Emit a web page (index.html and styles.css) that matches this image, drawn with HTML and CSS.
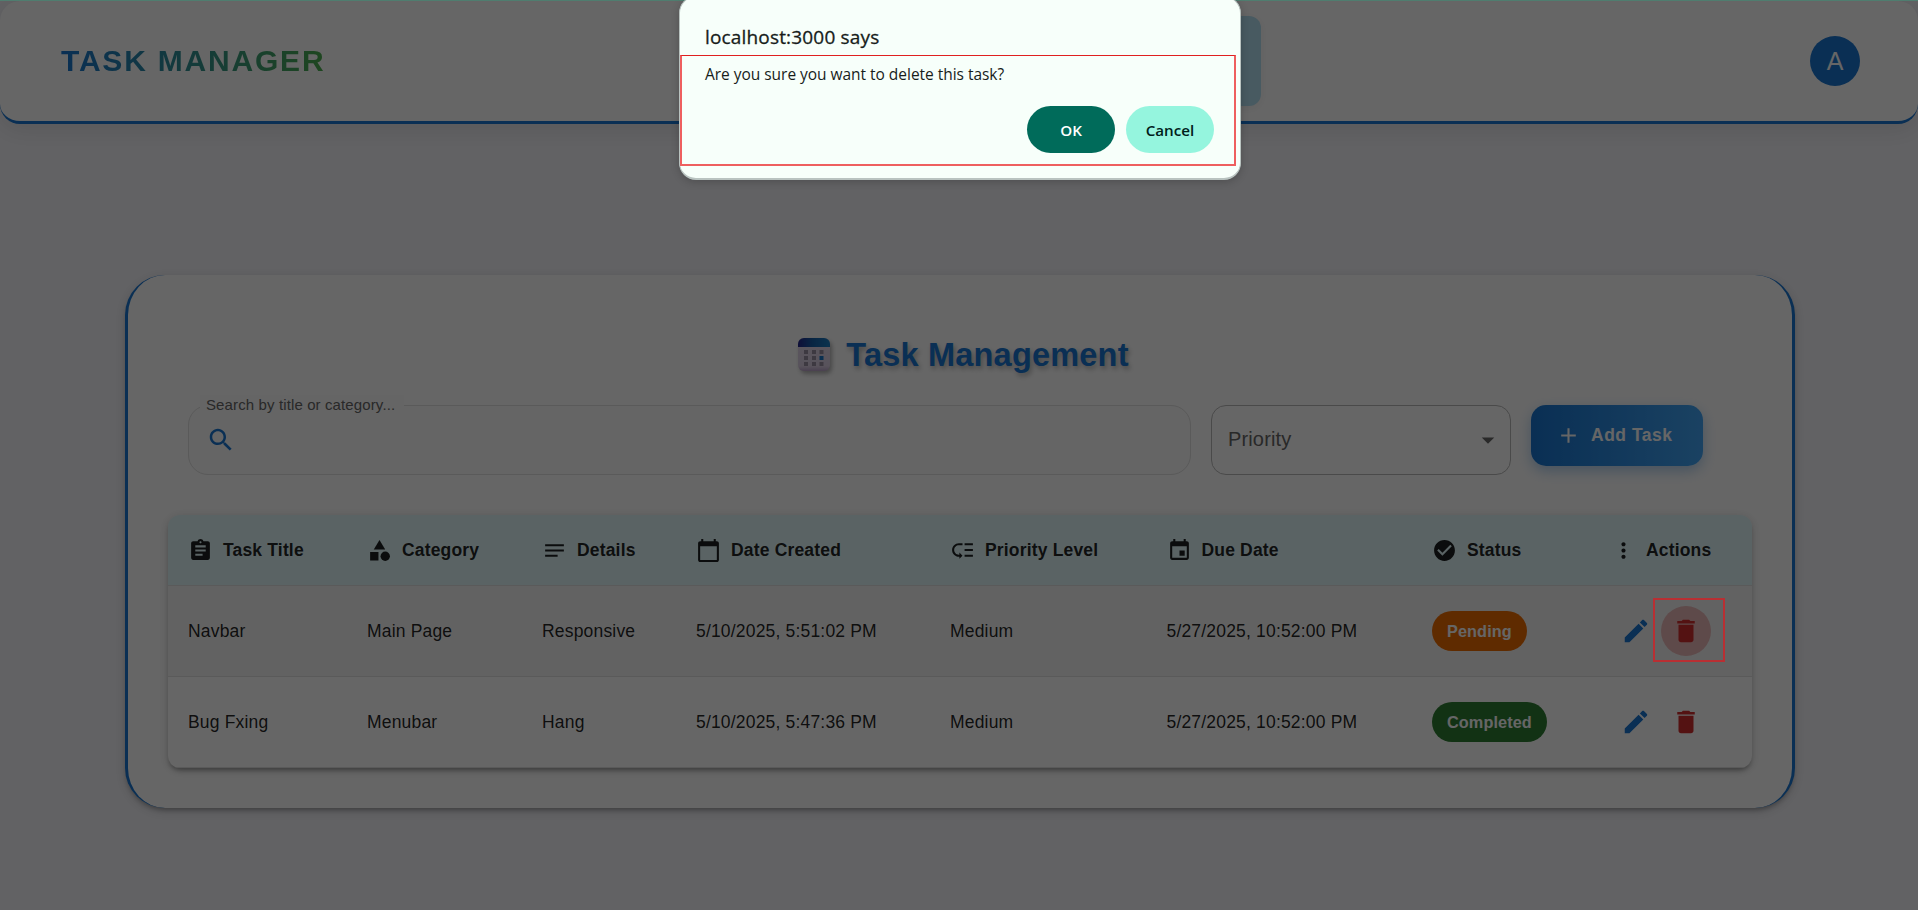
FILE: index.html
```html
<!DOCTYPE html>
<html lang="en">
<head>
<meta charset="utf-8">
<title>Task Manager</title>
<link rel="stylesheet" href="styles.css">
</head>
<body>
<svg class="sprite" width="0" height="0" aria-hidden="true">
  <symbol id="i-assignment" viewBox="0 0 24 24"><path d="M19 3h-4.18C14.4 1.84 13.3 1 12 1c-1.3 0-2.4.84-2.82 2H5c-1.1 0-2 .9-2 2v14c0 1.1.9 2 2 2h14c1.1 0 2-.9 2-2V5c0-1.1-.9-2-2-2zm-7 0c.55 0 1 .45 1 1s-.45 1-1 1-1-.45-1-1 .45-1 1-1zm2 14H7v-2h7v2zm3-4H7v-2h10v2zm0-4H7V7h10v2z"/></symbol>
  <symbol id="i-category" viewBox="0 0 24 24"><path d="M12 2l-5.5 9h11z"/><circle cx="17.5" cy="17.5" r="4.5"/><path d="M3 13.5h8v8H3z"/></symbol>
  <symbol id="i-notes" viewBox="0 0 24 24"><path d="M3 18h12v-2H3v2zM3 6v2h18V6H3zm0 7h18v-2H3v2z"/></symbol>
  <symbol id="i-calendar" viewBox="0 0 24 24"><path d="M20 3h-1V1h-2v2H7V1H5v2H4c-1.1 0-2 .9-2 2v16c0 1.1.9 2 2 2h16c1.1 0 2-.9 2-2V5c0-1.1-.9-2-2-2zm0 18H4V8h16v13z"/></symbol>
  <symbol id="i-low" viewBox="0 0 24 24"><path d="M14 5h8v2h-8zm0 5.5h8v2h-8zm0 5.5h8v2h-8zM2 11.5C2 15.08 4.92 18 8.5 18H9v2l3-3-3-3v2h-.5C6.02 16 4 13.98 4 11.5S6.02 7 8.5 7H12V5H8.5C4.92 5 2 7.92 2 11.5z"/></symbol>
  <symbol id="i-event" viewBox="0 0 24 24"><path d="M17 12h-5v5h5v-5zM16 1v2H8V1H6v2H5c-1.11 0-1.99.9-1.99 2L3 19c0 1.1.89 2 2 2h14c1.1 0 2-.9 2-2V5c0-1.1-.9-2-2-2h-1V1h-2zm3 18H5V8h14v11z"/></symbol>
  <symbol id="i-check" viewBox="0 0 24 24"><path d="M12 2C6.48 2 2 6.48 2 12s4.48 10 10 10 10-4.48 10-10S17.52 2 12 2zm-2 15l-5-5 1.41-1.41L10 14.17l7.59-7.59L19 8l-9 9z"/></symbol>
  <symbol id="i-more" viewBox="0 0 24 24"><path d="M12 8c1.1 0 2-.9 2-2s-.9-2-2-2-2 .9-2 2 .9 2 2 2zm0 2c-1.100 0-2 .9-2 2s.9 2 2 2 2-.9 2-2-.9-2-2-2zm0 6c-1.100 0-2 .9-2 2s.9 2 2 2 2-.9 2-2-.9-2-2-2z"/></symbol>
  <symbol id="i-edit" viewBox="0 0 24 24"><path d="M3 17.25V21h3.75L17.810 9.940l-3.750-3.750L3 17.250zM20.710 7.040c.39-.39.39-1.020 0-1.410l-2.340-2.340c-.39-.39-1.020-.39-1.410 0l-1.830 1.830 3.750 3.750 1.830-1.830z"/></symbol>
  <symbol id="i-delete" viewBox="0 0 24 24"><path d="M6 19c0 1.100.9 2 2 2h8c1.100 0 2-.9 2-2V7H6v12zM19 4h-3.500l-1-1h-5l-1 1H5v2h14V4z"/></symbol>
  <symbol id="i-search" viewBox="0 0 24 24"><path d="M15.500 14h-.79l-.28-.27C15.410 12.590 16 11.110 16 9.500 16 5.910 13.090 3 9.500 3S3 5.910 3 9.500 5.910 16 9.500 16c1.610 0 3.090-.59 4.230-1.570l.27.28v.79l5 4.990L20.490 19l-4.990-5zm-6 0C7.010 14 5 11.990 5 9.500S7.010 5 9.500 5 14 7.010 14 9.500 11.990 14 9.500 14z"/></symbol>
  <symbol id="i-add" viewBox="0 0 24 24"><path d="M19 13h-6v6h-2v-6H5v-2h6V5h2v6h6v2z"/></symbol>
  <symbol id="i-drop" viewBox="0 0 24 24"><path d="M7 10l5 5 5-5z"/></symbol>
</svg>

<div class="page">
  <header class="navbar">
    <div class="brand">TASK MANAGER</div>
    <div class="nav-pill"></div>
    <div class="avatar">A</div>
  </header>

  <main class="card">
    <h1 class="heading">
      <svg class="heading-icon" viewBox="0 0 32 34">
        <defs>
          <linearGradient id="cal-top" x1="0" x2="1"><stop offset="0" stop-color="#26268c"/><stop offset=".45" stop-color="#155ea8"/><stop offset="1" stop-color="#1d7fc4"/></linearGradient>
          <linearGradient id="cal-body" x1="0" y1="0" x2="0" y2="1"><stop offset="0" stop-color="#e2d8ea"/><stop offset=".85" stop-color="#dccfe4"/><stop offset="1" stop-color="#b9a0c8"/></linearGradient>
        </defs>
        <rect x="0" y="0" width="32" height="33" rx="6" fill="url(#cal-body)"/>
        <path d="M0 9V6a6 6 0 0 1 6-6h20a6 6 0 0 1 6 6v3z" fill="url(#cal-top)"/>
        <path fill="#9a8fa2" d="M6 12h4v4H6zM14 12h4v4h-4zM21.500 12h4v4h-4zM6 18h4v4H6zM14 18h4v4h-4zM6 24h4v4H6zM14 24h4v4h-4zM21.500 24h4v4h-4z"/>
        <path fill="#1976c8" d="M21.500 18h4v4h-4z"/>
      </svg>
      <span>Task Management</span>
    </h1>

    <div class="toolbar">
      <div class="search">
        <span class="search-label">Search by title or category...</span>
        <svg class="icon-lg"><use href="#i-search"/></svg>
      </div>
      <div class="select"><span>Priority</span><svg class="icon-lg"><use href="#i-drop"/></svg></div>
      <button class="add"><svg class="icon"><use href="#i-add"/></svg>Add Task</button>
    </div>

    <div class="table-wrap">
      <table>
        <colgroup><col class="c1"><col class="c2"><col class="c3"><col class="c4"><col class="c5"><col class="c6"><col class="c7"><col></colgroup>
        <thead>
          <tr>
            <th><div class="th"><svg class="icon"><use href="#i-assignment"/></svg>Task Title</div></th>
            <th><div class="th"><svg class="icon"><use href="#i-category"/></svg>Category</div></th>
            <th><div class="th"><svg class="icon"><use href="#i-notes"/></svg>Details</div></th>
            <th><div class="th"><svg class="icon"><use href="#i-calendar"/></svg>Date Created</div></th>
            <th><div class="th"><svg class="icon"><use href="#i-low"/></svg>Priority Level</div></th>
            <th><div class="th"><svg class="icon"><use href="#i-event"/></svg>Due Date</div></th>
            <th><div class="th"><svg class="icon"><use href="#i-check"/></svg>Status</div></th>
            <th><div class="th"><svg class="icon"><use href="#i-more"/></svg>Actions</div></th>
          </tr>
        </thead>
        <tbody>
          <tr class="hovered">
            <td>Navbar</td><td>Main Page</td><td>Responsive</td><td>5/10/2025, 5:51:02 PM</td><td>Medium</td><td>5/27/2025, 10:52:00 PM</td>
            <td><span class="chip pending">Pending</span></td>
            <td><div class="actions"><span class="btn edit"><svg class="icon-lg"><use href="#i-edit"/></svg></span><span class="btn delete active"><svg class="icon-lg"><use href="#i-delete"/></svg></span></div></td>
          </tr>
          <tr>
            <td>Bug Fxing</td><td>Menubar</td><td>Hang</td><td>5/10/2025, 5:47:36 PM</td><td>Medium</td><td>5/27/2025, 10:52:00 PM</td>
            <td><span class="chip completed">Completed</span></td>
            <td><div class="actions"><span class="btn edit"><svg class="icon-lg"><use href="#i-edit"/></svg></span><span class="btn delete"><svg class="icon-lg"><use href="#i-delete"/></svg></span></div></td>
          </tr>
        </tbody>
      </table>
    </div>
  </main>
</div>

<div class="scrim"></div>
<div class="mark mark-delete"></div>

<div class="dialog" role="alertdialog">
  <div class="dialog-title">localhost:3000 says</div>
  <div class="dialog-text">Are you sure you want to delete this task?</div>
  <div class="dialog-actions">
    <button class="ok">OK</button>
    <button class="cancel">Cancel</button>
  </div>
</div>
<div class="mark mark-dialog"></div>
</body>
</html>
```
FILE: styles.css
```css
* { box-sizing: border-box; }

body {
  margin: 0;
  height: 910px;
  overflow: hidden;
  position: relative;
  background: #f5f5fa;
  font-family: "Liberation Sans", Arial, sans-serif;
  font-size: 17.5px;
  color: rgba(0, 0, 0, 0.87);
}

button { border: 0; font-family: inherit; }

.sprite { position: absolute; }
.icon { width: 25px; height: 25px; fill: currentColor; flex: none; }
.icon-lg { width: 30px; height: 30px; fill: currentColor; flex: none; }

.page { padding-top: 1px; height: 910px; }

/* Top bar */
.navbar {
  display: flex;
  align-items: center;
  justify-content: space-between;
  height: 123px;
  padding: 0 58px 0 61px;
  background: #fff;
  border-bottom: 3px solid #1976d2;
  border-radius: 20px;
  box-shadow: 0 5px 25px rgba(0, 0, 0, 0.1);
}

.brand {
  font-size: 30px;
  font-weight: 700;
  letter-spacing: 1.8px;
  width: 264px;
  padding-bottom: 1px;
  white-space: nowrap;
  background: linear-gradient(90deg, #1976d2, #4caf50);
  background-clip: text;
  -webkit-background-clip: text;
  color: transparent;
}

.nav-pill {
  width: 560px;
  height: 90px;
  margin-left: auto;
  margin-right: 549px;
  border-radius: 12px;
  background: #b3e0f2;
  box-shadow: 0 2px 10px rgba(0, 0, 0, 0.06);
}

.avatar {
  width: 50px;
  height: 50px;
  border-radius: 50%;
  background: #1976d2;
  color: #fff;
  font-size: 25px;
  display: flex;
  align-items: center;
  justify-content: center;
}

/* Task card */
.card {
  width: 1670px;
  height: 533px;
  margin: 151px auto 0 125px;
  padding: 58px 40px 0;
  background: #fff;
  border: solid #1976d2;
  border-width: 0 3px;
  border-radius: 40px;
  box-shadow: 0 4px 5px -2px rgba(0, 0, 0, 0.3), 0 3px 12px rgba(0, 0, 0, 0.14);
}

.heading {
  margin: 0;
  height: 72px;
  display: flex;
  justify-content: center;
  gap: 16.5px;
  padding-left: 6.5px;
  font-size: 32.5px;
  line-height: 44px;
  letter-spacing: 0.2px;
  color: #1976d2;
  text-shadow: 2px 3px 5px rgba(0, 0, 0, 0.3);
}

.heading-icon {
  width: 32px;
  height: 34px;
  margin-top: 5px;
  filter: drop-shadow(2px 3px 2px rgba(0, 0, 0, 0.3));
}

.toolbar {
  display: flex;
  gap: 20px;
  height: 110px;
  padding: 0 20px;
}

.search {
  position: relative;
  display: flex;
  align-items: center;
  width: 1003px;
  height: 70px;
  padding-left: 17px;
  border: 1px solid #e0e0e0;
  border-radius: 20px;
  background: #fcfcfc;
  color: #1976d2;
}

.search-label {
  position: absolute;
  left: 11px;
  top: -11px;
  padding: 0 9px 0 6px;
  background: #fdfdfd;
  font-size: 15px;
  line-height: 19px;
  letter-spacing: 0.12px;
  color: #666;
}

.select {
  display: flex;
  align-items: center;
  justify-content: space-between;
  width: 300px;
  height: 70px;
  padding: 0 7px 0 16px;
  border: 1px solid #b8b8b8;
  border-radius: 15px;
  font-size: 20px;
  letter-spacing: 0.14px;
  color: #666;
}
.select span { padding-bottom: 2px; }

.add {
  display: flex;
  align-items: center;
  gap: 10px;
  width: 172px;
  height: 61px;
  padding: 0 0 0 25px;
  border-radius: 15px;
  background: linear-gradient(90deg, #1976d2, #42a5f5);
  box-shadow: 0 5px 13px rgba(25, 118, 210, 0.35);
  color: #fff;
  font-size: 17.5px;
  font-weight: 700;
  letter-spacing: 0.5px;
  white-space: nowrap;
}

/* Task table */
.table-wrap {
  width: 1584px;
  border-radius: 12px;
  overflow: hidden;
  box-shadow: 0 4px 5px -2px rgba(0, 0, 0, 0.35), 0 2px 10px rgba(0, 0, 0, 0.16);
}

table { width: 100%; table-layout: fixed; border-collapse: separate; border-spacing: 0; }
.c1 { width: 179px; }
.c2 { width: 175px; }
.c3 { width: 154px; }
.c4 { width: 254px; }
.c5 { width: 216.5px; }
.c6 { width: 265.5px; }
.c7 { width: 179px; }

th, td {
  padding: 0 0 0 20px;
  text-align: left;
  white-space: nowrap;
  border-bottom: 1px solid #e0e0e0;
}
th { height: 71px; padding-top: 1px; background: #e0f7fa; }
td { height: 91px; letter-spacing: 0.18px; }

.th { display: flex; align-items: center; gap: 10px; letter-spacing: 0.17px; }
.hovered { background: #f5f5f5; }

.chip {
  display: inline-flex;
  align-items: center;
  height: 40px;
  padding: 0 15px;
  border-radius: 20px;
  color: #fff;
  font-size: 16.25px;
  font-weight: 700;
  letter-spacing: 0.1px;
  vertical-align: middle;
}
.pending { background: #ed6c02; }
.completed { background: #2e7d32; }

.actions { display: flex; }
.btn {
  width: 50px;
  height: 50px;
  border-radius: 50%;
  display: flex;
  align-items: center;
  justify-content: center;
}
.edit { color: #1976d2; }
.delete { color: #d32f2f; }
.active { background: rgba(211, 47, 47, 0.3); }

/* Modal scrim with the browser's accent line on top */
.scrim {
  position: absolute;
  inset: 0;
  background: rgba(0, 0, 0, 0.6);
  border-top: 1px solid #4f7d6f;
}

.dialog {
  position: absolute;
  left: 679px;
  top: -4px;
  width: 562px;
  height: 184px;
  padding: 27px 26px 0 25px;
  border: 1px solid #b9c3c0;
  border-bottom-width: 2px;
  border-radius: 17px;
  background: #f7fffa;
  box-shadow: 0 2px 8px rgba(0, 0, 0, 0.2);
  font-family: "Open Sans", "Noto Sans", sans-serif;
  color: #171d1b;
}
.dialog-title {
  font-size: 19px;
  line-height: 26px;
  font-weight: 500;
  letter-spacing: 0.17px;
  -webkit-text-stroke: 0.3px #171d1b;
}
.dialog-text { margin-top: 12px; font-size: 15.5px; line-height: 24px; letter-spacing: -0.03px; }
.dialog-actions { display: flex; justify-content: flex-end; gap: 11px; margin-top: 20px; }
.dialog-actions button {
  width: 88px;
  height: 47px;
  border-radius: 24px;
  padding: 0;
  font-size: 15.2px;
  font-weight: 600;
}
.ok { background: #006b5a; color: #fff; }
.cancel { background: #95f5de; color: #00201a; }

/* Red annotation frames */
.mark { position: absolute; }
.mark-dialog {
  left: 680px;
  top: 55px;
  width: 556px;
  height: 111px;
  border: 2px solid #ee5f5f;
  border-top: 1px solid #e02020;
}
.mark-delete { left: 1653px; top: 598px; width: 72px; height: 64px; border: 2px solid #b92f33; }
```
